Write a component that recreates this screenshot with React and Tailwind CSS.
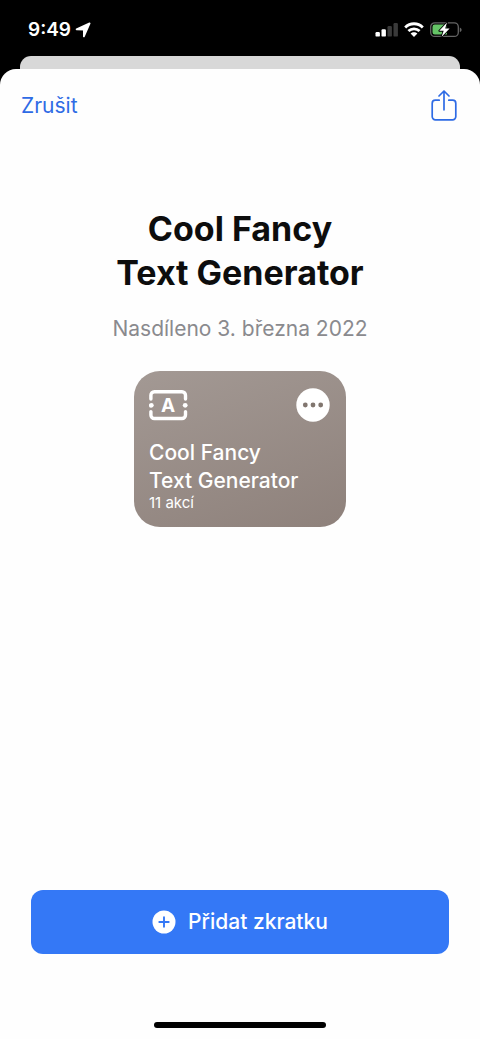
import React from 'react';

const StatusBar = () => (
  <div className="flex h-14 items-center justify-between pt-1 pr-[18px] pl-7 text-white">
    <div className="flex items-center gap-1">
      <span className="text-[19px] leading-6 font-semibold">9:49</span>
      <svg viewBox="0 0 16 16" className="h-4 w-4" aria-hidden="true">
        <path d="M14.6 1.4 8.9 14.4V7.5L1.6 7.3Z" fill="white" stroke="white" strokeWidth="1.8" strokeLinejoin="round" />
      </svg>
    </div>
    <div className="flex items-center gap-1.5">
      <svg viewBox="0 0 23 16" className="h-4 w-[23px]" aria-label="Signal">
        <rect x="0.5" y="10" width="4.4" height="4.6" rx="1.2" fill="white" />
        <rect x="6.5" y="7.2" width="4.4" height="7.4" rx="1.2" fill="white" />
        <rect x="12.5" y="4" width="4.4" height="10.6" rx="1.2" fill="#3a3a3a" />
        <rect x="18.5" y="1" width="4.4" height="13.6" rx="1.2" fill="#3a3a3a" />
      </svg>
      <svg viewBox="0 0 20 16" className="h-4 w-5" aria-label="Wi-Fi">
        <g fill="none" stroke="white" strokeWidth="2.8">
          <path d="M1.2 5.4C6.1.5 13.9.5 18.8 5.4" />
          <path d="M4.4 9.1C7.6 6 12.4 6 15.6 9.1" />
        </g>
        <path d="M10 15 6.6 11.6C8.5 9.8 11.5 9.8 13.4 11.6Z" fill="white" />
      </svg>
      <svg viewBox="0 0 32 16" className="h-4 w-8" aria-label="Battery">
        <rect x="0.7" y="0.8" width="27.6" height="13.6" rx="4" fill="none" stroke="#656565" strokeWidth="1.3" />
        <path d="M29.8 5.6v4.5c1.1-.4 1.8-1.2 1.8-2.2s-.7-1.9-1.8-2.3Z" fill="#656565" />
        <path d="M4.8 2.6H17v10H4.8a2.3 2.3 0 0 1-2.3-2.3V4.9a2.3 2.3 0 0 1 2.3-2.3Z" fill="#65c466" />
        <path d="M17 .6 9.3 8.8h4.4L11.5 15 19.6 6.5h-4.4Z" fill="white" stroke="black" strokeWidth="1.8" strokeLinejoin="round" paintOrder="stroke" />
      </svg>
    </div>
  </div>
);

const ShareIcon = () => (
  <svg viewBox="0 0 26 32" className="h-8 w-[26px]" fill="none" stroke="currentColor" strokeWidth="1.7" strokeLinecap="round" strokeLinejoin="round" aria-hidden="true">
    <path d="M8.2 10.2H4.4a3.2 3.2 0 0 0-3.2 3.2v13.2a3.2 3.2 0 0 0 3.2 3.2h17.2a3.2 3.2 0 0 0 3.2-3.2V13.4a3.2 3.2 0 0 0-3.2-3.2h-3.8" />
    <path d="M13 19.8V1.2M8 6l5-5 5 5" />
  </svg>
);

// Ticket-like frame with a letter, the glyph of the shortcut
const TextFrameIcon = () => (
  <svg viewBox="0 0 40 32" className="h-8 w-10" aria-hidden="true">
    <g fill="none" stroke="white" strokeWidth="3.4" strokeLinecap="round">
      <path d="M1.9 10V6.2a3.5 3.5 0 0 1 3.5-3.5H33a3.5 3.5 0 0 1 3.5 3.5V10" />
      <path d="M1.9 22.6v3.4a3.5 3.5 0 0 0 3.5 3.5H33a3.5 3.5 0 0 0 3.5-3.5v-3.4" />
    </g>
    <circle cx="2.3" cy="16.3" r="2.4" fill="white" />
    <circle cx="36.2" cy="16.3" r="2.4" fill="white" />
    <text x="19.2" y="23" textAnchor="middle" fill="white" className="text-[19px] font-bold">A</text>
  </svg>
);

const ShortcutCard = () => (
  <article className="mx-auto mt-7 w-[212px] rounded-[26px] bg-linear-160 from-[#a39994] to-[#8e817b] px-[15px] pt-4 pb-4 text-white">
    <div className="flex items-center justify-between">
      <TextFrameIcon />
      <button type="button" aria-label="Upravit" className="flex h-9 w-9 items-center justify-center">
        <svg viewBox="0 0 34 34" className="h-[34px] w-[34px]" aria-hidden="true">
          <circle cx="17" cy="17" r="16.7" fill="white" />
          <g fill="#81766f">
            <circle cx="9.3" cy="17" r="2.4" />
            <circle cx="17" cy="17" r="2.4" />
            <circle cx="24.7" cy="17" r="2.4" />
          </g>
        </svg>
      </button>
    </div>
    <h2 className="mt-4 text-[21px] leading-7 font-medium">
      Cool Fancy
      <br />
      Text Generator
    </h2>
    <p className="text-[15px] leading-4">11 akcí</p>
  </article>
);

const App = () => {
  return (
    <div className="flex min-h-screen flex-col bg-black font-['Inter',sans-serif]">
      <StatusBar />
      <div className="mx-5 h-[13px] rounded-t-[11px] bg-[#d8d8d8]" />

      <main className="flex flex-1 flex-col rounded-t-2xl bg-[#fefefe]">
        <header className="flex h-[73px] items-center justify-between pr-[23px] pl-[21px]">
          <button type="button" className="text-[21px] leading-7 text-[#2e6be5]">Zrušit</button>
          <button type="button" aria-label="Sdílet" className="text-[#2e6be5]">
            <ShareIcon />
          </button>
        </header>

        <section className="mt-[65px] text-center">
          <h1 className="text-[34px] leading-[44px] font-bold text-[#0d0d0d]">
            Cool Fancy
            <br />
            Text Generator
          </h1>
          <p className="mt-5 text-[21px] leading-7 text-[#8a8a8e]">Nasdíleno 3. března 2022</p>
        </section>

        <ShortcutCard />

        <footer className="mt-auto px-[31px] pb-[11px]">
          <button type="button" className="flex h-16 w-full items-center justify-center gap-3 rounded-xl bg-[#3478f6] text-[21px] leading-7 font-medium text-white">
            <svg viewBox="0 0 24 24" className="h-6 w-6" aria-hidden="true">
              <circle cx="12" cy="12" r="11.5" fill="white" />
              <path d="M12 7.3v9.4M7.3 12h9.4" stroke="#3478f6" strokeWidth="1.9" strokeLinecap="round" />
            </svg>
            Přidat zkratku
          </button>
          <div className="mx-auto mt-[68px] h-1.5 w-[172px] rounded-full bg-black" />
        </footer>
      </main>
    </div>
  );
};

export default App;
